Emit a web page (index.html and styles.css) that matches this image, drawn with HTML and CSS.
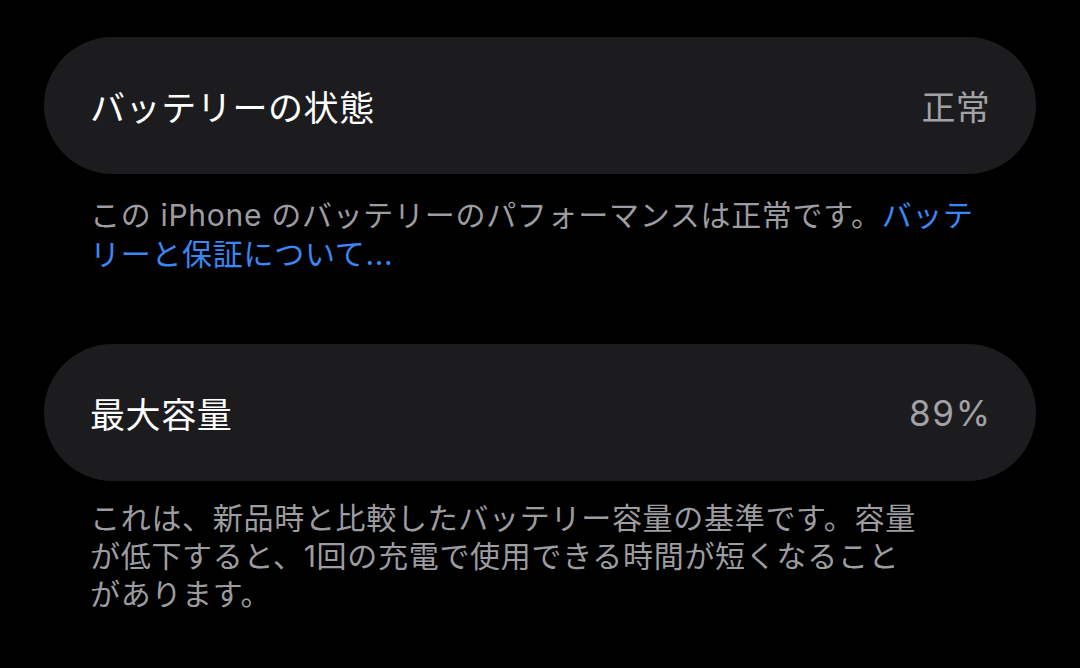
FILE: index.html
```html
<!DOCTYPE html>
<html lang="ja">
<head>
<meta charset="utf-8">
<link rel="stylesheet" href="styles.css">
</head>
<body>
<main class="page">
  <section class="group group-health">
    <div class="cell">
      <span class="cell-title">バッテリーの状態</span>
      <span class="cell-value">正常</span>
    </div>
    <p class="footer footer-health">この iPhone のバッテリーのパフォーマンスは正常です。<a class="link">バッテ<br>リーと保証について...</a></p>
  </section>
  <section class="group group-capacity">
    <div class="cell">
      <span class="cell-title">最大容量</span>
      <span class="cell-value cell-value-num">89%</span>
    </div>
    <p class="footer footer-capacity">これは、新品時と比較したバッテリー容量の基準です。容量<br>が低下すると、1回の充電で使用できる時間が短くなること<br>があります。</p>
  </section>
</main>
</body>
</html>
```

FILE: styles.css
```css
html, body {
  margin: 0;
  padding: 0;
  background: #000;
}
body {
  width: 1080px;
  height: 668px;
  overflow: hidden;
  font-family: "Inter", "Noto Sans CJK JP", sans-serif;
  -webkit-font-smoothing: antialiased;
}
.page {
  display: flex;
  flex-direction: column;
  padding: 37px 44px 0 44px;
}
.group {
  display: flex;
  flex-direction: column;
}
.group-capacity {
  margin-top: 70px;
}
.cell {
  height: 137px;
  border-radius: 69px;
  background: #1c1c1e;
  display: flex;
  align-items: center;
  justify-content: space-between;
  padding: 0 46px 0 46px;
}
.cell-title {
  color: #ffffff;
  font-size: 35px;
  letter-spacing: 0.6px;
}
.cell-value {
  color: #a1a1a6;
  font-size: 34px;
  letter-spacing: 0.3px;
}
.cell-value-num {
  font-size: 35px;
  letter-spacing: 1.8px;
  margin-right: -2px;
}
.footer {
  margin: 0;
  padding: 0 0 0 46px;
  color: #9c9ca1;
  font-size: 30px;
  line-height: 39px;
  letter-spacing: 0.7px;
}
.footer-health {
  padding-top: 22px;
}
.footer-capacity {
  padding-top: 18px;
  line-height: 38px;
}
.link {
  color: #3a87f5;
}
```
